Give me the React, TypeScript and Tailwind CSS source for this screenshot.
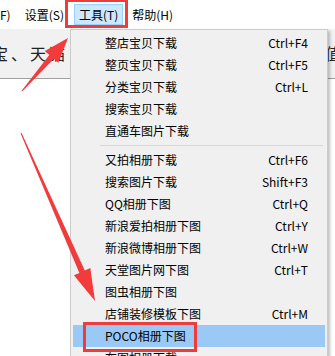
import React from 'react';

type Pt = [number, number];

// tapered arrow: thin tail, wider shaft at the head, triangular head
function arrowPoints(t: Pt, p: Pt, w0: number, w1: number, hl: number, hw: number) {
  const dx = p[0] - t[0];
  const dy = p[1] - t[1];
  const len = Math.hypot(dx, dy);
  const ux = dx / len;
  const uy = dy / len;
  const nx = -uy;
  const ny = ux;
  const bx = p[0] - ux * hl;
  const by = p[1] - uy * hl;
  const pts: Pt[] = [
    [t[0] + (nx * w0) / 2, t[1] + (ny * w0) / 2],
    [bx + (nx * w1) / 2, by + (ny * w1) / 2],
    [bx + nx * hw, by + ny * hw],
    p,
    [bx - nx * hw, by - ny * hw],
    [bx - (nx * w1) / 2, by - (ny * w1) / 2],
    [t[0] - (nx * w0) / 2, t[1] - (ny * w0) / 2],
  ];
  return pts.map((q) => `${q[0].toFixed(1)},${q[1].toFixed(1)}`).join(' ');
}

const GROUP_A = [
  { label: '整店宝贝下载', key: 'Ctrl+F4' },
  { label: '整页宝贝下载', key: 'Ctrl+F5' },
  { label: '分类宝贝下载', key: 'Ctrl+L' },
  { label: '搜索宝贝下载', key: '' },
  { label: '直通车图片下载', key: '' },
];

const GROUP_B = [
  { label: '又拍相册下载', key: 'Ctrl+F6' },
  { label: '搜索图片下载', key: 'Shift+F3' },
  { label: 'QQ相册下图', key: 'Ctrl+Q' },
  { label: '新浪爱拍相册下图', key: 'Ctrl+Y' },
  { label: '新浪微博相册下图', key: 'Ctrl+W' },
  { label: '天堂图片网下图', key: 'Ctrl+T' },
  { label: '图虫相册下图', key: '' },
  { label: '店铺装修模板下图', key: 'Ctrl+M' },
  { label: 'POCO相册下图', key: '', active: true },
  { label: '布图相册下载', key: '' },
];

function MenuItem({ label, shortcut, active }: { label: string; shortcut: string; active?: boolean }) {
  return (
    <div
      className={`relative mx-[2px] flex h-[22px] items-center justify-between pl-[32px] pr-[17px] ${
        active ? 'bg-[#99c9f4]' : ''
      }`}
    >
      <span>{label}</span>
      {shortcut && <span>{shortcut}</span>}
      {active && (
        <div className="pointer-events-none absolute left-[10px] top-[-3px] h-[30px] w-[114px] border-[3px] border-[#ee3b3b]" />
      )}
    </div>
  );
}

export default function App() {
  return (
    <div className="relative h-[356px] w-[335px] overflow-hidden bg-white text-[12px] leading-none text-black font-['Noto_Sans_CJK_SC','Noto_Sans',sans-serif]">
      {/* Menu bar */}
      <div className="flex h-[29px] items-center bg-white">
        <span className="pr-[14px]">F)</span>
        <span className="pr-[10px]">设置(S)</span>
        <span className="relative flex h-[21px] items-center border border-[#99d1ff] bg-[#cce8ff] px-[4px]">
          工具(T)
          <div className="absolute left-[-10px] top-[-6px] h-[29px] w-[63px] border-[3px] border-[#ee3b3b]" />
        </span>
        <span className="pl-[9px]">帮助(H)</span>
      </div>

      {/* Toolbar strip */}
      <div className="flex h-[50px] items-center justify-between border-b border-[#a0a0a0] bg-[#f1f1f1] pb-[1px]">
        <span className="ml-[-8px] text-[16px] tracking-[3px] text-[#222]">宝、天猫</span>
        <span className="mr-[-6px] text-[16px] text-[#222]">值</span>
      </div>

      {/* Dropdown menu */}
      <div className="absolute left-[70px] top-[29px] w-[258px] border border-[#cccccc] bg-[#f0f0f0] pt-[2px] pb-[2px] shadow-[2px_2px_3px_rgba(0,0,0,0.25)]">
        {GROUP_A.map((it) => (
          <MenuItem key={it.label} label={it.label} shortcut={it.key} />
        ))}
        <div className="flex h-[7px] items-center pl-[29px] pr-[4px]">
          <div className="h-px w-full bg-[#d7d7d7]" />
        </div>
        {GROUP_B.map((it) => (
          <MenuItem key={it.label} label={it.label} shortcut={it.key} active={it.active} />
        ))}
      </div>

      {/* Red annotation arrows */}
      <svg className="pointer-events-none absolute left-0 top-0" width={335} height={356} viewBox="0 0 335 356">
        <polygon points={arrowPoints([22, 91], [68, 38], 1, 6, 25, 9)} fill="#f23b3b" />
        <polygon points={arrowPoints([21, 133], [95, 301], 1, 6, 32, 9)} fill="#f23b3b" />
      </svg>
    </div>
  );
}
